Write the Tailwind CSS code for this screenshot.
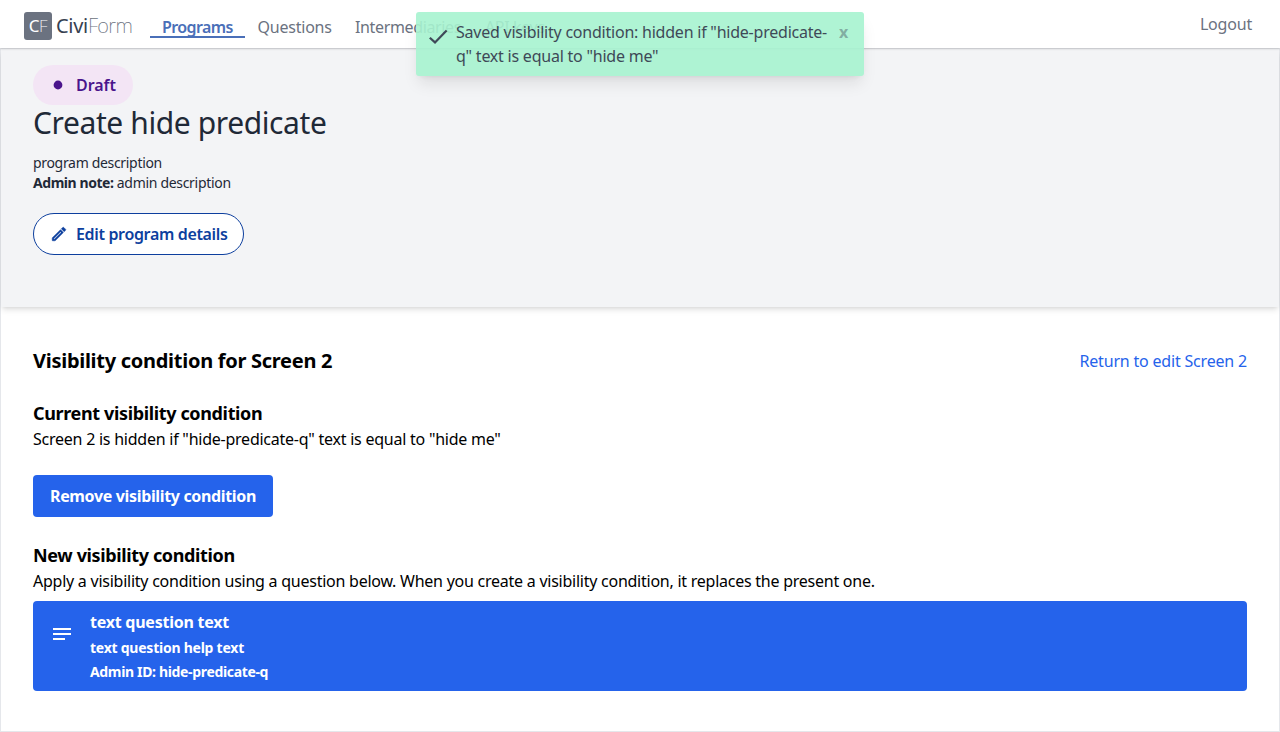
<!DOCTYPE html>
<html lang="en">
<head>
<meta charset="utf-8">
<title>Configure visibility condition</title>
<script src="https://cdn.jsdelivr.net/npm/@tailwindcss/browser@4"></script>
</head>
<body class="h-[732px] overflow-hidden bg-white font-['Noto_Sans',sans-serif] text-base text-black">
<div class="flex h-full flex-col">
  <nav class="relative z-10 flex h-12 shrink-0 items-start bg-white pl-6 pr-7 text-[#6b7280] shadow-[0_1px_2px_rgba(0,0,0,0.16)]">
    <div class="mt-3 flex h-7 items-center">
      <div class="flex size-7 items-center justify-center rounded-[3px] bg-[#6b7280] text-[17px] leading-7 text-white"><span class="tracking-[-0.5px]">C</span><span class="font-extralight">F</span></div>
      <div class="ml-1 text-[20px] leading-7 whitespace-nowrap"><span class="tracking-[-0.28px] text-[#374151]">Civi</span><span class="font-extralight tracking-[-0.6px]">Form</span></div>
    </div>
    <div class="absolute left-[150px] top-[15px] flex whitespace-nowrap leading-6">
      <a class="h-[23px] w-[95px] border-b-2 border-[#4a6fb8] px-3 font-semibold tracking-[-0.6px] text-[#4a6fb8]">Programs</a>
      <a class="w-[98px] pl-[12.5px] tracking-[-0.22px]">Questions</a>
      <a class="w-[130px] px-3 tracking-[-0.36px]">Intermediaries</a>
      <a class="px-3 tracking-[-0.36px]">API keys</a>
    </div>
    <a class="ml-auto mt-3 leading-6 tracking-[-0.2px]">Logout</a>
  </nav>
  <main class="flex-1 border border-[#e5e7eb]">
    <section class="h-[258px] bg-[#f3f4f6] px-8 pt-4 text-[#1f2937] shadow-md">
      <div class="flex h-10 w-[100px] items-center rounded-[20px] bg-[#f3e5f5] pl-4 font-semibold text-[#4a148c]">
        <svg class="size-[18px]" viewBox="0 0 18 18" fill="currentColor"><circle cx="9" cy="9" r="4.4"/></svg>
        <span class="ml-[9px] tracking-[-0.05px]">Draft</span>
      </div>
      <h1 class="text-3xl leading-9 tracking-[-0.4px]">Create hide predicate</h1>
      <div class="mt-3 text-sm leading-5">
        <p class="tracking-[-0.32px]">program description</p>
        <p class="tracking-[-0.31px]"><b class="tracking-[-0.44px]">Admin note:</b> admin description</p>
      </div>
      <button class="mt-5 flex h-[42px] w-[211px] items-center rounded-full border border-[#0d3f9e] bg-white pl-4 font-semibold whitespace-nowrap text-[#0d3f9e]">
        <svg class="size-[18px]" viewBox="0 0 24 24" fill="currentColor" stroke="currentColor" stroke-width="0.7"><path d="M3 17.46v3.04c0 .28.22.5.5.5h3.04c.13 0 .26-.05.35-.15L17.81 9.94l-3.75-3.75L3.15 17.1c-.1.1-.15.22-.15.36zM5.92 19H5v-.92l9.06-9.06.92.92L5.92 19zM20.71 5.63l-2.34-2.34a1 1 0 0 0-1.41 0l-1.83 1.83 3.75 3.75 1.83-1.83a1 1 0 0 0 0-1.41z"/></svg>
        <span class="ml-2 tracking-[-0.34px]">Edit program details</span>
      </button>
    </section>
    <section class="px-8 pt-10">
      <div class="flex h-7 items-center justify-between">
        <h2 class="text-xl font-bold tracking-[-0.28px]">Visibility condition for Screen 2</h2>
        <a class="tracking-[-0.19px] text-[#2563eb]">Return to edit Screen 2</a>
      </div>
      <h3 class="mt-6 text-lg leading-7 font-bold tracking-[-0.36px]">Current visibility condition</h3>
      <p class="leading-6 tracking-[-0.242px]">Screen 2 is hidden if "hide-predicate-q" text is equal to "hide me"</p>
      <button class="mt-6 h-[42px] w-60 rounded-[4px] bg-[#2563eb] font-bold tracking-[-0.344px] text-white">Remove visibility condition</button>
      <h3 class="mt-6 text-lg leading-7 font-bold tracking-[-0.37px]">New visibility condition</h3>
      <p class="leading-6 tracking-[-0.248px]">Apply a visibility condition using a question below. When you create a visibility condition, it replaces the present one.</p>
      <div class="mt-2 flex h-[90px] rounded-[4px] bg-[#2563eb] pt-[9px] pl-[17px] font-bold text-white">
        <svg class="mt-[13px] size-6" viewBox="0 0 24 24" fill="currentColor"><path d="M3 5h18v2H3zM3 10h18v2H3zM3 15h12v2H3z"/></svg>
        <div class="ml-4">
          <p class="leading-6 tracking-[-0.24px]">text question text</p>
          <p class="mt-1 text-sm leading-5 tracking-[-0.24px]">text question help text</p>
          <p class="mt-1 text-sm leading-5 tracking-[-0.34px]">Admin ID: hide-predicate-q</p>
        </div>
      </div>
    </section>
  </main>
</div>
<div class="absolute left-[416px] top-3 z-20 flex h-16 w-[448px] rounded-[3px] bg-[#a7f3d0] pt-2 pl-3 text-[#2b3646] opacity-90 shadow-lg">
  <svg class="mt-[7px] size-5" viewBox="0 0 20 20" fill="none" stroke="currentColor" stroke-width="2.2"><path d="M1.8 10.7 7 15.4 18.6 3.4"/></svg>
  <p class="ml-2 leading-6 whitespace-nowrap tracking-[-0.227px]">Saved visibility condition: hidden if "hide-predicate-<br>q" text is equal to "hide me"</p>
  <span class="ml-3 leading-6 font-bold opacity-40">x</span>
</div>
</body>
</html>
